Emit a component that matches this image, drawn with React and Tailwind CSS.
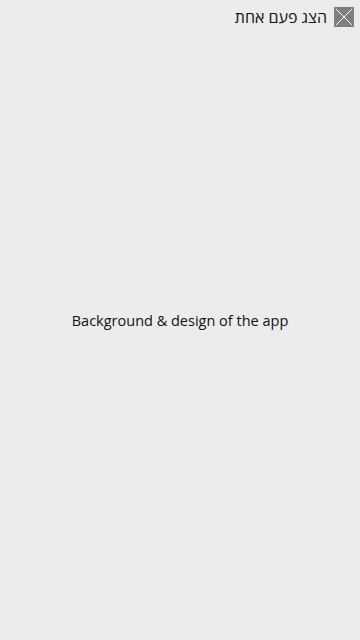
import React from 'react'

export default function App() {
  return (
    <div className="flex h-[640px] w-[360px] flex-col bg-[#ececec] font-['Open_Sans',sans-serif] text-[#111]">
      {/* top bar */}
      <div className="flex items-center justify-end gap-[7px] pr-[6px] pt-[7px]">
        <span dir="rtl" className="text-[16px] leading-5">הצג פעם אחת</span>
        <button className="flex h-[20px] w-[20px] items-center justify-center bg-[#7f7f7f]">
          <svg width="20" height="20" viewBox="0 0 20 20">
            <path d="M2 2 L18 18 M18 2 L2 18" stroke="#fff" strokeWidth="1" />
          </svg>
        </button>
      </div>

      <div className="flex flex-1 items-center justify-center pb-[26px]">
        <p className="text-[14.5px]">Background &amp; design of the app</p>
      </div>
    </div>
  )
}
